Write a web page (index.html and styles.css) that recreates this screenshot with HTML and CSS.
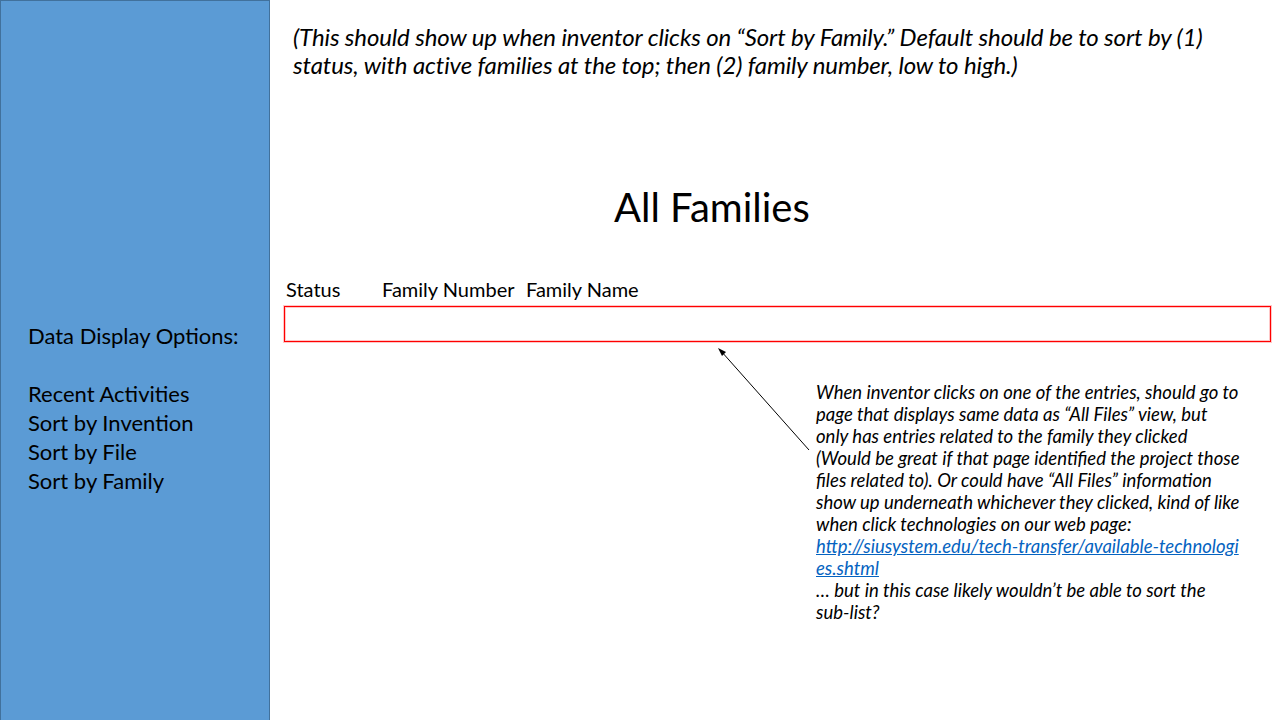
FILE: index.html
```html
<!DOCTYPE html>
<html lang="en">
<head>
<meta charset="utf-8">
<title>All Families</title>
<link rel="stylesheet" href="styles.css">
</head>
<body>
<div class="page">
  <aside class="sidebar">
    <div class="side-heading">Data Display Options:</div>
    <ul class="side-list">
      <li>Recent Activities</li>
      <li>Sort by Invention</li>
      <li>Sort by File</li>
      <li>Sort by Family</li>
    </ul>
  </aside>
  <main class="main">
    <p class="intro">(This should show up when inventor clicks on “Sort by Family.” Default should be to sort by (1)<br>status, with active families at the top; then (2) family number, low to high.)</p>
    <h1 class="title">All Families</h1>
    <div class="cols">
      <span class="col col-status">Status</span>
      <span class="col col-num">Family Number</span>
      <span class="col col-name">Family Name</span>
    </div>
    <div class="entry-box"></div>
    <p class="note">When inventor clicks on one of the entries, should go to<br>page that displays same data as “All Files” view, but<br>only has entries related to the family they clicked<br>(Would be great if that page identified the project those<br>files related to). Or could have “All Files” information<br>show up underneath whichever they clicked, kind of like<br>when click technologies on our web page:<br><a class="link" href="#">http://siusystem.edu/tech-transfer/available-technologi<br>es.shtml</a><br>… but in this case likely wouldn’t be able to sort the<br>sub-list?</p>
    <svg class="arrow" width="100" height="110" viewBox="0 0 100 110">
      <line x1="96" y1="104" x2="8" y2="5" stroke="#000" stroke-width="1"/>
      <polygon points="5,2 13,6 9,10" fill="#000"/>
    </svg>
  </main>
</div>
</body>
</html>
```

FILE: styles.css
```css
html, body {
  margin: 0;
  padding: 0;
  background: #ffffff;
}
.page {
  display: flex;
  width: 1280px;
  height: 720px;
  overflow: hidden;
  font-family: Lato, "Open Sans", sans-serif;
  color: #000;
}
.sidebar {
  box-sizing: border-box;
  width: 270px;
  height: 722px;
  flex: none;
  background: #5b9bd5;
  border: 1px solid #41719c;
  padding: 320px 0 0 27px;
  font-size: 22px;
  line-height: 29px;
}
.side-heading {
  margin: 0 0 29px 0;
}
.side-list {
  list-style: none;
  margin: 0;
  padding: 0;
}
.main {
  position: relative;
  flex: 1;
}
.intro {
  margin: 23px 0 0 23px;
  font-style: italic;
  font-size: 24px;
  line-height: 28px;
  letter-spacing: -0.12px;
}
.title {
  margin: 104px 0 0 344px;
  font-weight: normal;
  font-size: 40px;
  line-height: 48px;
}
.cols {
  display: flex;
  margin: 46px 0 0 16px;
  font-size: 20px;
  line-height: 24px;
}
.col-status { width: 96px; }
.col-num { width: 144px; }
.entry-box {
  box-sizing: border-box;
  margin: 5px 0 0 14px;
  width: 987px;
  height: 36px;
  border: 1px solid #ff0000;
  box-shadow: 0 0 0 1px rgba(255, 0, 0, 0.22), inset 0 0 0 1px rgba(255, 0, 0, 0.22);
}
.note {
  margin: 39px 0 0 546px;
  font-style: italic;
  font-size: 18.5px;
  line-height: 22px;
}
.link {
  color: #0563c1;
  text-decoration: underline;
}
.arrow {
  position: absolute;
  left: 443px;
  top: 346px;
}
```
